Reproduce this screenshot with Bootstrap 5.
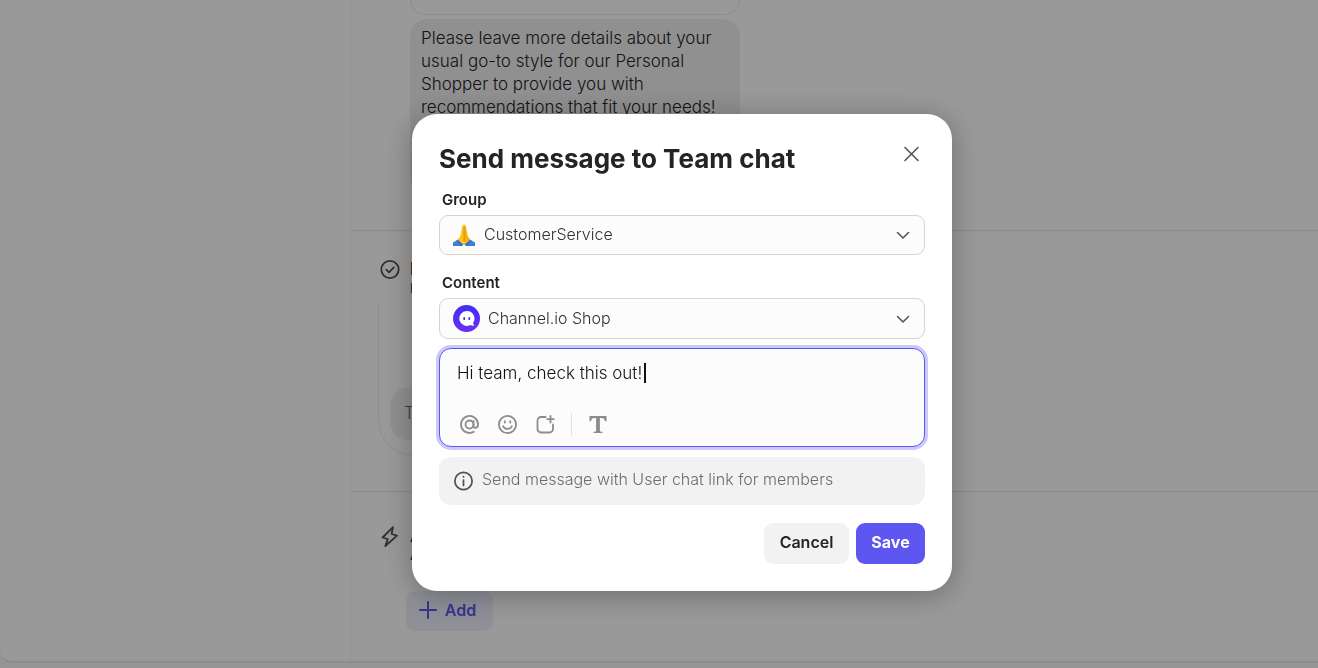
<!DOCTYPE html>
<html lang="en">
<head>
<meta charset="utf-8">
<meta name="viewport" content="width=device-width, initial-scale=1">
<title>Send message to Team chat</title>
<link href="https://cdn.jsdelivr.net/npm/bootstrap@5.3.0/dist/css/bootstrap.min.css" rel="stylesheet">
<style>
  :root { --brand: #5e56f0; --ink: #242428; }
  body { font-family: Inter, "Liberation Sans", sans-serif; font-size: 17px; line-height: 23px; color: var(--ink); overflow: hidden; background: #f8f8f8; }
  svg { display: block; fill: none; stroke: currentColor; stroke-linecap: round; stroke-linejoin: round; }
  .svg-solid { stroke: none; }

  /* Workflow page */
  .workflow { border-bottom: 2px solid #e9e9e9; border-bottom-left-radius: 12px; background: #fff; }
  .side-pane { width: 351px; border-right: 1px solid #f0f0f0; }
  .step { border-bottom: 1px solid #e6e6e6; }
  .step-chat { height: 231px; padding-left: 59px; }
  .step-check { height: 261px; padding: 28px 0 0 28px; }
  .step-action { height: 169px; padding: 34px 0 0 28px; }
  .step-head { gap: 9px; }
  .step-head svg { color: #505050; }
  .bubble { width: 330px; border-radius: 18px; padding: 8px 11px; font-weight: 300; }
  .bubble-previous { height: 15px; padding: 0; border: 1px solid #ececec; border-top: 0; border-radius: 0 0 18px 18px; }
  .bubble-gray { background: #f0f0f0; min-height: 177px; margin-top: 4px; }
  .step-title { font-size: 17px; font-weight: 600; line-height: 20px; }
  .step-note { font-size: 13px; line-height: 18px; }
  .preview { width: 360px; height: 152px; margin: 7px 0 0 -1px; border: 1px solid #ececec; border-top: 0; border-radius: 0 0 36px 36px; padding: 84px 11px 0; }
  .preview-note { background: #f0f0f0; border-radius: 18px; height: 52px; padding: 14px; font-weight: 300; color: #666; }
  .btn-add { background: #efeffd; color: var(--brand); font-weight: 600; font-size: 16px; height: 40px; width: 87px; border-radius: 9px; border: 0; margin: 27px 0 0 27px; padding: 0 16px 2px 12px; }

  /* Dialog */
  .modal { background: rgba(0, 0, 0, .4); padding: 114px 0 0 46px; }
  .modal-dialog { max-width: 540px; margin: 0 auto; }
  .modal-content { border: 0; border-radius: 25px; padding: 27px; box-shadow: 0 4px 30px rgba(0, 0, 0, .3); }
  .dialog-title { font-size: 26px; line-height: 35px; font-weight: 700; }
  .btn-dismiss { color: #555; border: 0; background: none; padding: 4px; }
  .form-label { font-size: 15px; line-height: 20px; font-weight: 600; padding-left: 3px; margin-bottom: 5px; }
  .field-group { margin-top: 14px; }
  .field-gap { margin-bottom: 18px; }
  .form-select { height: 40px; font-size: 16px; font-weight: 300; line-height: 22px; color: #303034; border: 1px solid #d4d4d4; border-radius: 9px; background-color: #fcfcfc; padding: 7px 40px 9px 44px;
    background-image: url("data:image/svg+xml,%3Csvg xmlns='http://www.w3.org/2000/svg' viewBox='0 0 14 14'%3E%3Cpath fill='none' stroke='%23505050' stroke-width='1.5' stroke-linecap='round' d='M1.5 4.5 7 10l5.500-5.500'/%3E%3C/svg%3E"); background-size: 14px; background-position: right 14px center; }
  .select-shop { height: 41px; padding-left: 48px; }
  .select-icon { position: absolute; left: 14px; top: 0; bottom: 0; margin: auto 0; pointer-events: none; }
  .composer { margin-top: 9px; border: 1px solid var(--brand); border-radius: 12px; background: #fcfcfd; box-shadow: 0 0 0 3px #cbc8fb; padding: 13px 17px 9px; }
  .composer textarea { font-size: 17px; line-height: 23px; height: 50px; font-weight: 300; color: #111; resize: none; }
  .caret { position: absolute; left: 187px; top: 1px; width: 2px; height: 20px; background: #111; }
  .tool-row { gap: 13px; }
  .tool-btn { border: 0; background: none; padding: 2px; color: #8c8c8c; }
  .tool-btn .svg-solid { fill: currentColor; }
  .tool-divider { width: 1px; height: 23px; background: #e3e3e3; }
  .info-note { margin-top: 10px; height: 48px; background: #f2f2f2; border-radius: 12px; padding: 0 14px; font-size: 16px; font-weight: 300; color: #6c6c6c; }
  .info-note span { padding-bottom: 3px; }
  .info-note svg { color: #505050; }
  .dialog-actions { margin-top: 18px; gap: 7px; }
  .btn-dialog { height: 41px; border: 0; border-radius: 9px; font-size: 16px; font-weight: 600; padding: 0 15px 3px; }
  .btn-cancel { background: #f2f2f2; color: var(--ink); min-width: 85px; }
  .btn-save { background: var(--brand); color: #fff; font-weight: 700; min-width: 69px; }
</style>
</head>
<body>
<main class="workflow d-flex">
  <aside class="side-pane flex-shrink-0"></aside>
  <div class="flex-grow-1">
    <section class="step step-chat">
      <div class="bubble bubble-previous"></div>
      <div class="bubble bubble-gray">Please leave more details about your usual go-to style for our Personal Shopper to provide you with recommendations that fit your needs!</div>
    </section>
    <section class="step step-check">
      <div class="step-head d-flex">
        <svg width="22" height="22" viewBox="0 0 22 22" stroke-width="1.800"><circle cx="11" cy="10.500" r="8.700"/><path d="m7.300 10.700 2.700 2.600 4.800-4.900"/></svg>
        <div><div class="step-title">If</div><div class="step-note">Filter</div></div>
      </div>
      <div class="preview"><div class="preview-note">Text</div></div>
    </section>
    <section class="step-action">
      <div class="step-head d-flex">
        <svg width="22" height="22" viewBox="0 0 22 22" stroke-width="1.800"><path d="M14 1.200 3.600 11.500l5.200 1.600-2.500 7L18 9.600 12.600 8z"/></svg>
        <div><div class="step-title">Action</div><div class="step-note">Add actions</div></div>
      </div>
      <button type="button" class="btn btn-add d-flex align-items-center justify-content-center">
        <svg width="18" height="18" viewBox="0 0 18 18" stroke-width="2"><path d="M9 1v16M1 9h16"/></svg>
        <span class="ms-2">Add</span>
      </button>
    </section>
  </div>
</main>

<div class="modal d-block" role="dialog" aria-modal="true" aria-labelledby="dialogTitle">
  <div class="modal-dialog">
    <form class="modal-content">
      <div class="d-flex justify-content-between align-items-start">
        <h1 class="dialog-title mb-0" id="dialogTitle">Send message to Team chat</h1>
        <button type="button" class="btn-dismiss" aria-label="Close"><svg width="19" height="19" viewBox="0 0 19 19" stroke-width="1.600"><path d="m3 2.500 13 13M16 2.500l-13 13"/></svg></button>
      </div>

      <label class="form-label field-group" for="group">Group</label>
      <div class="position-relative field-gap">
        <select class="form-select" id="group"><option>CustomerService</option></select>
        <svg class="select-icon svg-solid" width="22" height="23" viewBox="0 0 24 24">
          <path fill="#3d7fd9" d="M0 19.500 6 16l6 5-2 2.500H0zM24 19.500 18 16l-6 5 2 2.500h10z"/>
          <path fill="#fbc51b" d="M11.800 0C10.500 0 10 1.200 9.600 4L8.400 11c-.4 2-1.500 3.500-3.400 5.500L9.700 22c1.300-1 2.100-2 2.300-4z"/>
          <path fill="#f3b30c" d="M12.200 0c1.300 0 1.800 1.200 2.200 4l1.200 7c.4 2 1.500 3.500 3.400 5.500L14.300 22c-1.300-1-2.100-2-2.300-4z"/>
          <path stroke="#c77c0b" stroke-width=".9" d="M12 3v15"/>
          <path fill="#2f66b8" d="m5 16.500 5.500 5-1.300 2-5.200-6.200zM19 16.500l-5.500 5 1.300 2 5.200-6.200z"/>
        </svg>
      </div>

      <label class="form-label" for="sender">Content</label>
      <div class="position-relative">
        <select class="form-select select-shop" id="sender"><option>Channel.io Shop</option></select>
        <svg class="select-icon svg-solid" width="27" height="27" viewBox="0 0 27 27">
          <defs><linearGradient id="shopFill" x2="0" y2="1"><stop stop-color="#4030f5"/><stop offset="1" stop-color="#6a2ef5"/></linearGradient></defs>
          <circle cx="13.500" cy="13.500" r="13.500" fill="url(#shopFill)"/>
          <path fill="#fff" d="M13.700 6a7.500 7.500 0 1 0 3.600 14.100c1 .6 2.200.8 3.600.7.300 0 .4-.3.200-.5-.7-.7-1-1.500-1-2.500A7.500 7.500 0 0 0 13.700 6z"/>
          <path stroke="#4a2ff5" stroke-width="1.800" d="M11.200 12.800v1.400M16.300 12.800v1.400"/>
        </svg>
      </div>

      <div class="composer">
        <div class="position-relative">
          <textarea class="form-control border-0 bg-transparent p-0 shadow-none" aria-label="Message">Hi team, check this out!</textarea>
          <span class="caret"></span>
        </div>
        <div class="tool-row d-flex align-items-center">
          <button type="button" class="tool-btn" aria-label="Mention"><svg width="21" height="21" viewBox="0 0 21 21" stroke-width="1.800"><circle cx="10.500" cy="10.500" r="4"/><path d="M14.500 6.800v5c0 3 4.500 3 4.500-1.300a8.500 8.500 0 1 0-4.200 7.300"/></svg></button>
          <button type="button" class="tool-btn" aria-label="Emoji"><svg width="21" height="21" viewBox="0 0 21 21" stroke-width="1.800"><circle cx="10.500" cy="10.500" r="8.600"/><path d="M6.200 12.300c1.600 3.400 7 3.400 8.600 0M7.800 7.200v1.400M13.200 7.200v1.400"/></svg></button>
          <button type="button" class="tool-btn" aria-label="Attach"><svg width="21" height="21" viewBox="0 0 21 21" stroke-width="1.800"><path d="M10.500 3H6a3.500 3.500 0 0 0-3.500 3.500V15A3.500 3.500 0 0 0 6 18.500h8.500A3.500 3.500 0 0 0 18 15v-4.500M15.500 2v6.500M12.200 5.200h6.600"/></svg></button>
          <span class="tool-divider"></span>
          <button type="button" class="tool-btn" aria-label="Text style"><svg class="svg-solid" width="21" height="21" viewBox="0 0 21 21"><path d="M2.500 2h17v5.200h-1.600c-.3-2.200-1.200-3.300-3.100-3.300h-1.900v12.500c0 .9.500 1.200 2.500 1.300V19H6.600v-1.300c2-.1 2.500-.4 2.500-1.300V3.900H7.200c-1.900 0-2.800 1.100-3.100 3.300H2.500z"/></svg></button>
        </div>
      </div>

      <div class="info-note d-flex align-items-center gap-2">
        <svg width="21" height="21" viewBox="0 0 21 21" stroke-width="1.700"><circle cx="10.500" cy="10" r="8.600"/><path d="M10.500 9v5.500M10.500 5.700v.2"/></svg>
        <span>Send message with User chat link for members</span>
      </div>

      <div class="dialog-actions d-flex justify-content-end">
        <button type="button" class="btn btn-dialog btn-cancel">Cancel</button>
        <button type="submit" class="btn btn-dialog btn-save">Save</button>
      </div>
    </form>
  </div>
</div>
<script src="https://cdn.jsdelivr.net/npm/bootstrap@5.3.0/dist/js/bootstrap.bundle.min.js"></script>
</body>
</html>
